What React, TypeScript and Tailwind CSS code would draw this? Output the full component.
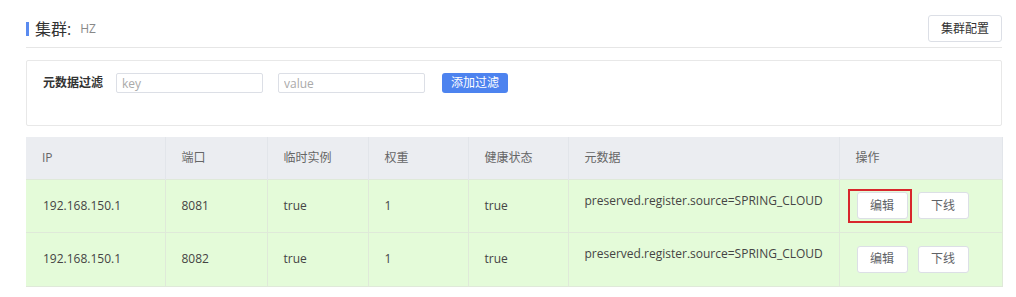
import React from 'react';

const rows = [
  { ip: '192.168.150.1', port: '8081', ephemeral: 'true', weight: '1', healthy: 'true', meta: 'preserved.register.source=SPRING_CLOUD', marked: true },
  { ip: '192.168.150.1', port: '8082', ephemeral: 'true', weight: '1', healthy: 'true', meta: 'preserved.register.source=SPRING_CLOUD', marked: false },
];

const headers = ['IP', '端口', '临时实例', '权重', '健康状态', '元数据', '操作'];

function SmallButton({ children }: { children: React.ReactNode }) {
  return (
    <button className="h-[27px] w-[51px] rounded-[3px] border border-[#dcdfe6] bg-white text-[12px] text-[#606266]">
      {children}
    </button>
  );
}

export default function App() {
  return (
    <div
      className="min-h-[297px] bg-white pl-[26px] pr-[14px] pt-[15px]"
      style={{ fontFamily: '"Open Sans", "Noto Sans CJK SC", sans-serif' }}
    >
      {/* page header */}
      <div className="flex items-center justify-between border-b border-[#e6e6e6] pb-[5px]">
        <div className="flex items-center">
          <span className="mr-[6px] h-[14px] w-[3px] bg-[#5a8bf0]" />
          <span className="text-[16px] leading-none text-[#333]">集群:</span>
          <span className="ml-[9px] text-[12px] leading-none text-[#888]">HZ</span>
        </div>
        <button className="h-[27px] w-[74px] rounded-[3px] border border-[#dcdfe6] bg-white text-[12px] text-[#333]">
          集群配置
        </button>
      </div>

      {/* filter card */}
      <div className="mt-[12px] h-[66px] rounded-[2px] border border-[#e8e8e8] pl-[16px] pt-[12px]">
        <div className="flex items-center">
          <span className="mr-[13px] text-[12px] font-semibold text-[#333]">元数据过滤</span>
          <input
            placeholder="key"
            className="h-[20px] w-[147px] rounded-[2px] border border-[#dcdfe6] px-[5px] text-[12px] text-[#333] placeholder:text-[#aaa] outline-none"
          />
          <input
            placeholder="value"
            className="ml-[15px] h-[20px] w-[147px] rounded-[2px] border border-[#dcdfe6] px-[5px] text-[12px] text-[#333] placeholder:text-[#aaa] outline-none"
          />
          <button className="ml-[17px] h-[20px] w-[66px] rounded-[3px] bg-[#4d83ef] text-[12px] text-white">
            添加过滤
          </button>
        </div>
      </div>

      {/* instance table */}
      <table className="mt-[11px] w-[976px] table-fixed border-collapse text-[12px]">
        <colgroup>
          <col className="w-[139px]" />
          <col className="w-[102px]" />
          <col className="w-[101px]" />
          <col className="w-[100px]" />
          <col className="w-[100px]" />
          <col className="w-[271px]" />
          <col className="w-[163px]" />
        </colgroup>
        <thead>
          <tr className="h-[42px] bg-[#ebedf1]">
            {headers.map((h) => (
              <th key={h} className="border-x border-[#e2e5ea] px-4 text-left font-normal text-[#666] first:border-l-0">
                {h}
              </th>
            ))}
          </tr>
        </thead>
        <tbody>
          {rows.map((r, i) => (
            <tr key={r.port} className={`bg-[#e4fbd9] ${i === 0 ? 'h-[53px]' : 'h-[54px]'}`}>
              <td className="border border-l-0 border-[#dfe9d9] pl-[17px] text-[#444]">{r.ip}</td>
              <td className="border border-[#dfe9d9] px-4 text-[#444]">{r.port}</td>
              <td className="border border-[#dfe9d9] px-4 text-[#444]">{r.ephemeral}</td>
              <td className="border border-[#dfe9d9] px-4 text-[#444]">{r.weight}</td>
              <td className="border border-[#dfe9d9] px-4 text-[#444]">{r.healthy}</td>
              <td className="border border-[#dfe9d9] px-4 pt-[12px] align-top text-[#444]">{r.meta}</td>
              <td className="border border-[#dfe9d9] pl-[17px]">
                <div className="relative flex gap-[10px]">
                  <SmallButton>编辑</SmallButton>
                  <SmallButton>下线</SmallButton>
                  {r.marked && (
                    <span className="pointer-events-none absolute left-[-9px] top-[-3px] h-[34px] w-[64px] border-2 border-[#d8262c]" />
                  )}
                </div>
              </td>
            </tr>
          ))}
        </tbody>
      </table>
    </div>
  );
}
